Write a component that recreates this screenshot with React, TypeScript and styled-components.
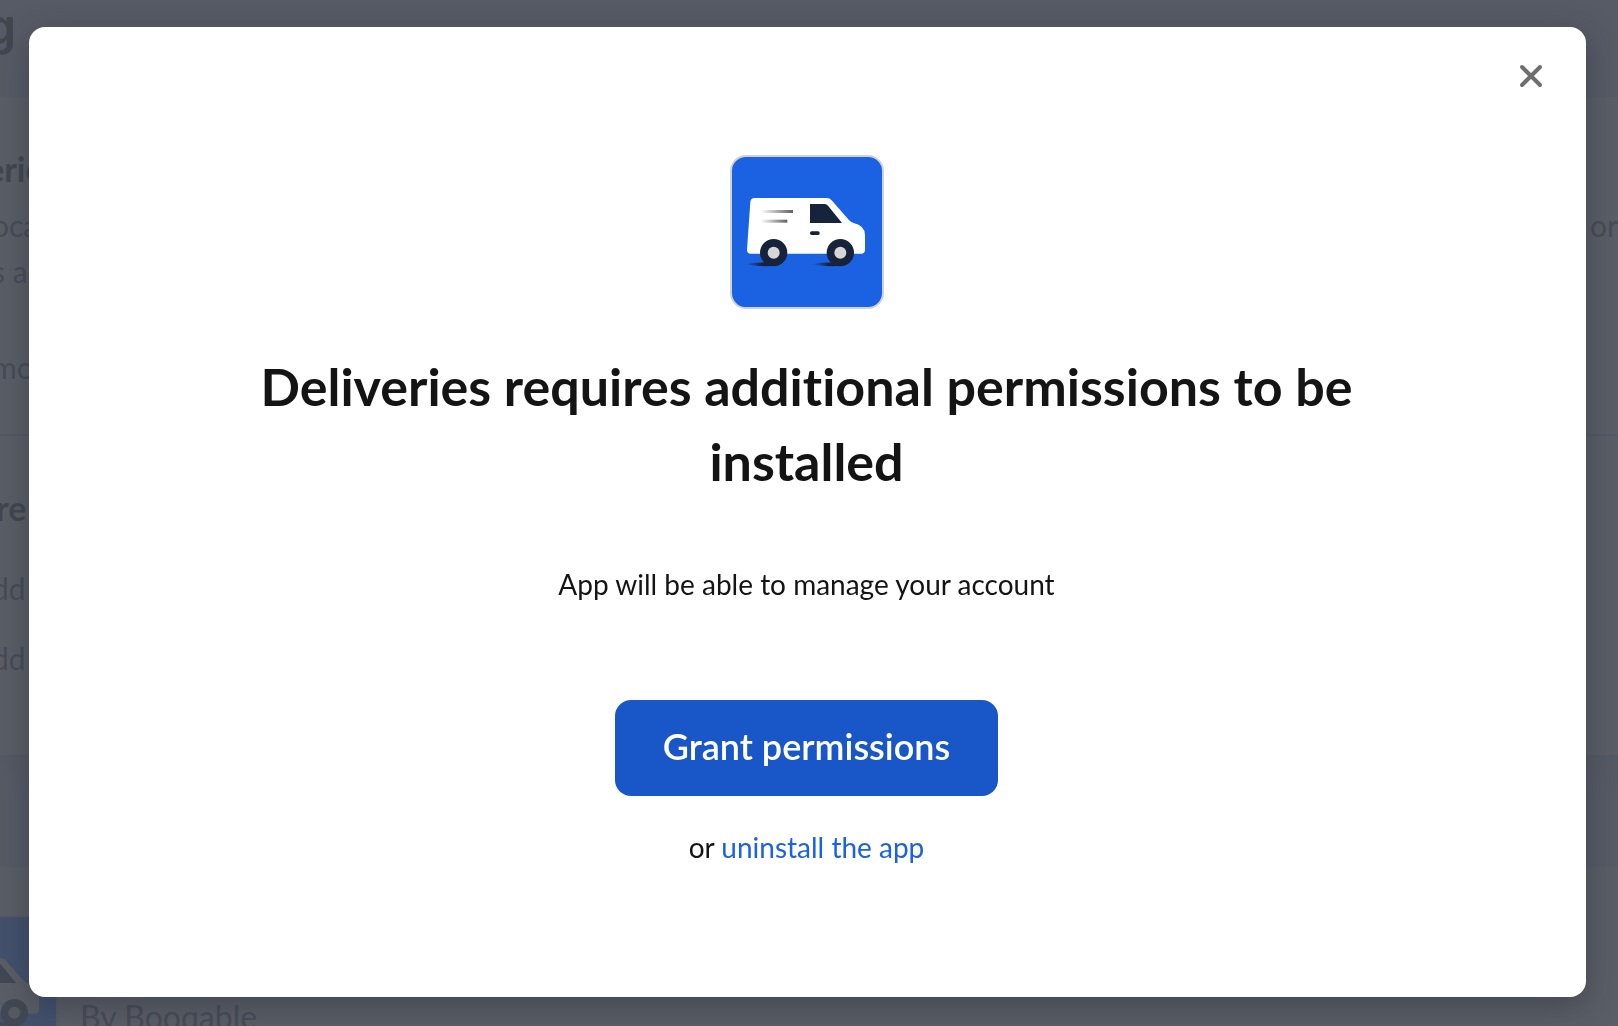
import React from "react";
import styled, { createGlobalStyle } from "styled-components";

const GlobalStyle = createGlobalStyle`
  * { box-sizing: border-box; }
  html, body { margin: 0; height: 100%; }
  body {
    overflow: hidden;
    background: #575c66;
    color: #141414;
    font-family: "Lato", "Liberation Sans", sans-serif;
    font-variant-ligatures: none;
  }
  h1, h2, p { margin: 0; }
`;

const Page = styled.div`
  height: 100vh;
  overflow: hidden;
  display: flex;
  flex-direction: column;
  color: #484c57;
`;

const PageHeader = styled.header`
  height: 97px;
  flex: none;
  background: #575b66;
`;

const PageTitle = styled.h1`
  margin-left: -15px;
  font-family: "Inter", "Liberation Sans", sans-serif;
  font-size: 50px;
  line-height: 52px;
  font-weight: 600;
  color: #42464f;
`;

const Panel = styled.section`
  flex: none;
  display: flex;
  flex-direction: column;
  background: #5a5e66;
`;

const AboutSection = styled(Panel)`
  height: 339px;
  padding-top: 47px;
  border-bottom: 2px solid #545967;
`;

const FeatureSection = styled(Panel)`
  height: 319px;
  padding-top: 47px;
`;

const PanelTitle = styled.h2<{ $cut: number }>`
  margin-left: ${(p) => -p.$cut}px;
  font-size: 34px;
  line-height: 50px;
  font-weight: 700;
  color: #42464f;
`;

const Line = styled.p<{ $gap?: number }>`
  display: flex;
  justify-content: space-between;
  margin: ${(p) => p.$gap ?? 0}px 0 0 -8px;
  font-size: 30px;
  line-height: 46px;
`;

const Divider = styled.div`
  height: 112px;
  flex: none;
  background: linear-gradient(#545a64, #575b66 40px);
`;

const AppRow = styled(Panel)`
  flex: 1;
  flex-direction: row;
  gap: 22px;
  padding-top: 48px;
`;

const Vendor = styled.p`
  padding-top: 84px;
  font-size: 32px;
  line-height: 36px;
  white-space: nowrap;
`;

const Overlay = styled.div`
  position: fixed;
  inset: 0;
  display: flex;
  padding: 27px 32px 29px 29px;
`;

const Dialog = styled.div`
  position: relative;
  flex: 1;
  display: flex;
  flex-direction: column;
  align-items: center;
  padding: 128px 162px 0 160px;
  border-radius: 16px;
  background: #fff;
  box-shadow: 0 8px 32px rgba(32, 36, 48, 0.4);
  text-align: center;
`;

const CloseButton = styled.button`
  position: absolute;
  top: 29px;
  right: 35px;
  display: flex;
  padding: 8px;
  border: 0;
  background: none;
  cursor: pointer;
`;

const IconFrame = styled.div<{ $muted?: boolean }>`
  flex: none;
  width: 154px;
  height: 154px;
  margin-left: ${(p) => (p.$muted ? -96 : 0)}px;
  overflow: hidden;
  border: 2px solid ${(p) => (p.$muted ? "#575b63" : "#d0d1d4")};
  border-radius: 16px;
  background: ${(p) => (p.$muted ? "#43516d" : "#1a62e2")};

  svg { display: block; }
`;

const Title = styled.h2`
  margin-top: 40px;
  max-width: 1180px;
  font-size: 52px;
  line-height: 75px;
  font-weight: 700;
`;

const Text = styled.p`
  font-size: 28px;
  line-height: 40px;
`;

const Description = styled(Text)`
  margin-top: 65px;
`;

const GrantButton = styled.button`
  height: 96px;
  margin: 96px 0 31px;
  padding: 0 48px 4px;
  border: 0;
  border-radius: 16px;
  background: #1956c7;
  color: #fff;
  font: 600 36px "Lato", "Liberation Sans", sans-serif;
  cursor: pointer;
`;

const Link = styled.a`
  color: #1a62e2;
  text-decoration: none;
`;

function VanIcon({ id, muted }: { id: string; muted?: boolean }) {
  const body = muted ? "#5a5e66" : "#fff";
  const dark = muted ? "#424854" : "#17233b";
  const hub = muted ? "#565a62" : "#d6d6d6";
  return (
    <IconFrame $muted={muted}>
      <svg width="150" height="150" viewBox="36 36 450 450" aria-hidden="true">
        <defs>
          <linearGradient id={`${id}-speed`}>
            <stop offset="0" stopColor="#444" stopOpacity="0" />
            <stop offset="1" stopColor="#444" stopOpacity="0.85" />
          </linearGradient>
          <linearGradient id={`${id}-shade`}>
            <stop offset="0" stopColor={dark} stopOpacity="0" />
            <stop offset="0.6" stopColor={dark} />
          </linearGradient>
        </defs>
        <path d="M76 358Q100 351 160 352V363Q105 365 76 358Z" fill={`url(#${id}-shade)`} />
        <path d="M276 358Q300 351 360 352V363Q305 365 276 358Z" fill={`url(#${id}-shade)`} />
        <path
          d="M104 159H320Q329 159 335 166L386 224Q392 231 401 234Q435 242 435 270V314Q435 326 423 326H92Q81 326 81 314L91 171Q92 159 104 159Z"
          fill={body}
        />
        <path d="M270 177H314Q320 177 324 182L366 234H270Z" fill={dark} />
        <rect x="270" y="259" width="29" height="11" rx="5" fill={dark} />
        <rect x="122" y="195" width="97" height="9" fill={`url(#${id}-speed)`} />
        <rect x="122" y="224" width="80" height="9" fill={`url(#${id}-speed)`} />
        <circle cx="161" cy="323" r="41" fill={dark} />
        <circle cx="161" cy="323" r="18" fill={hub} />
        <circle cx="361" cy="323" r="41" fill={dark} />
        <circle cx="361" cy="323" r="18" fill={hub} />
      </svg>
    </IconFrame>
  );
}

export default function App() {
  return (
    <>
      <GlobalStyle />
      <Page aria-hidden="true">
        <PageHeader>
          <PageTitle>g</PageTitle>
        </PageHeader>
        <AboutSection>
          <PanelTitle $cut={14}>erie</PanelTitle>
          <Line $gap={8}>
            <span>oca</span>
            <span>or</span>
          </Line>
          <Line>s a</Line>
          <Line $gap={50}>mo</Line>
        </AboutSection>
        <FeatureSection>
          <PanelTitle $cut={4}>re</PanelTitle>
          <Line $gap={32}>dd</Line>
          <Line $gap={24}>dd</Line>
        </FeatureSection>
        <Divider />
        <AppRow>
          <VanIcon id="row" muted />
          <Vendor>By Booqable</Vendor>
        </AppRow>
      </Page>
      <Overlay>
        <Dialog role="dialog" aria-modal="true" aria-labelledby="dialog-title">
          <CloseButton type="button" aria-label="Close">
            <svg width="24" height="24" viewBox="0 0 24 24" aria-hidden="true">
              <path d="M3 3L21 21M21 3L3 21" stroke="#6e6e6e" strokeWidth="4" strokeLinecap="round" />
            </svg>
          </CloseButton>
          <VanIcon id="dialog" />
          <Title id="dialog-title">
            Deliveries requires additional permissions to be installed
          </Title>
          <Description>App will be able to manage your account</Description>
          <GrantButton type="button">Grant permissions</GrantButton>
          <Text>
            or <Link href="#uninstall">uninstall the app</Link>
          </Text>
        </Dialog>
      </Overlay>
    </>
  );
}
